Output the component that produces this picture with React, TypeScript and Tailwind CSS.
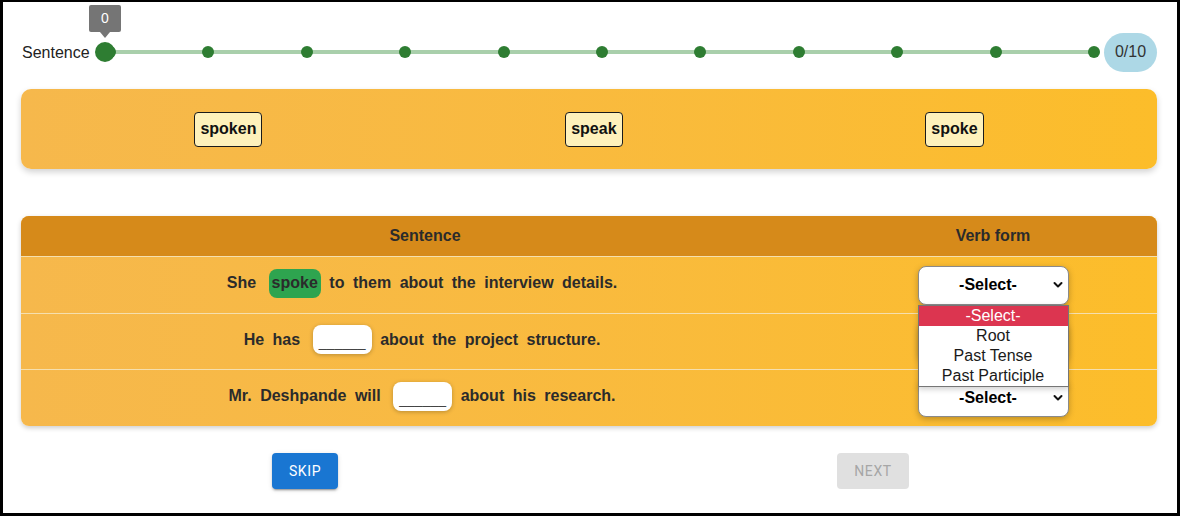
import React from "react";

const font = { fontFamily: '"Liberation Sans", Arial, sans-serif' };

function Chevron() {
  return (
    <svg width="10" height="7" viewBox="0 0 10 7" className="absolute right-[5px] top-1/2 -translate-y-1/2">
      <polyline points="1.5,1.5 5,5 8.5,1.5" fill="none" stroke="#111" strokeWidth="2" strokeLinecap="round" strokeLinejoin="round" />
    </svg>
  );
}

function SelectBox({ open = false, hidden = false, h = "h-[39px]" }: { open?: boolean; hidden?: boolean; h?: string }) {
  return (
    <div className="relative w-[151px]">
      <div className={`relative ${h} w-[151px] bg-white border border-[#8a8a8a] rounded-[8px] shadow-[0_2px_6px_rgba(0,0,0,0.25)] flex items-center justify-center pr-[10px] text-[16px] font-bold text-black`}>
        {hidden ? null : "-Select-"}
        <Chevron />
      </div>
      {open && (
        <div className="absolute left-0 top-full w-[151px] z-10 bg-white border border-[#767676] text-[16px] leading-[20px] text-[#1a1a1a] text-center shadow-[0_2px_6px_rgba(0,0,0,0.2)]">
          <div className="bg-[#dc3550] text-white">-Select-</div>
          <div>Root</div>
          <div>Past Tense</div>
          <div>Past Participle</div>
        </div>
      )}
    </div>
  );
}

function Blank() {
  return (
    <span className="ml-[4px] inline-flex items-end justify-center w-[59px] h-[29px] bg-white rounded-[8px] shadow-[0_1px_4px_rgba(0,0,0,0.25)] font-normal text-[#444] text-[14px] pb-[5px] leading-none">
      ______
    </span>
  );
}

function Sentence({ parts }: { parts: React.ReactNode[] }) {
  return (
    <div className="flex items-center justify-center gap-[8.5px] text-[16px] font-bold text-[#2b2b2b] pb-[4px] pr-[6px]">
      {parts.map((p, i) => (typeof p === "string" ? <span key={i}>{p}</span> : <React.Fragment key={i}>{p}</React.Fragment>))}
    </div>
  );
}

export default function App() {
  const dots = Array.from({ length: 11 });
  return (
    <div style={font} className="w-[1180px] h-[516px] border-[3px] border-t-2 border-black bg-white text-[#222]">
      <div className="pl-[18px] pr-[20px]">
        {/* slider row */}
        <div className="mt-[30px] h-[40px] flex items-center">
          <div className="w-[74px] pl-[1px] pt-[2px] text-[16px] text-[#222]">Sentence</div>
          <div className="relative w-[1009px] h-[40px]">
            <div className="absolute left-[10px] right-[10px] top-1/2 -translate-y-1/2 h-[4px] bg-[#a9cfab]" />
            <div className="absolute left-[9px] right-[4px] top-1/2 -translate-y-1/2 flex justify-between">
              {dots.map((_, i) => (
                <div key={i} className="w-[12px] h-[12px] rounded-full bg-[#2e7d32]" />
              ))}
            </div>
            <div className="absolute left-0 top-[10px] w-[20px] h-[20px] rounded-full bg-[#2e7d32]" />
            <div className="absolute left-[-6px] top-[-27px] w-[32px] h-[27px] bg-[#757575] rounded-[2px] flex items-center justify-center text-white text-[14px]">
              0
              <div className="absolute left-1/2 -translate-x-1/2 top-full w-0 h-0 border-l-[5px] border-r-[5px] border-t-[6px] border-l-transparent border-r-transparent border-t-[#757575]" />
            </div>
          </div>
          <div className="w-[53px] h-[39px] rounded-full bg-[#add8e6] flex items-center justify-center text-[16px] text-[#333]">
            0/10
          </div>
        </div>

        {/* word bank */}
        <div className="mt-[17px] h-[80px] rounded-[10px] bg-gradient-to-r from-[#f6b84c] to-[#fcbd2a] shadow-[0_3px_6px_rgba(0,0,0,0.18)] flex items-center justify-around px-[22px]">
          {["spoken", "speak", "spoke"].map((w) => (
            <div key={w} className="h-[35px] px-[5px] flex items-center bg-[#fef1bb] border border-[#1a1a1a] rounded-[4px] text-[16px] font-bold text-[#111]">
              {w}
            </div>
          ))}
        </div>

        {/* table */}
        <div className="mt-[47px] rounded-[8px] shadow-[0_2px_5px_rgba(0,0,0,0.2)] bg-gradient-to-r from-[#f6b84c] to-[#fcbd2a]">
          <div className="h-[40px] flex items-center bg-[#d68a1a] rounded-t-[8px] text-[16px] font-bold text-[#2b2b2b]">
            <div className="w-[808px] text-center">Sentence</div>
            <div className="flex-1 text-center">Verb form</div>
          </div>
          <div className="h-[57px] flex items-center border-t border-[#f5dfae]">
            <div className="w-[808px]">
              <Sentence
                parts={[
                  "She",
                  <span className="ml-[4px] h-[29px] px-[3px] flex items-center bg-[#2ea44f] rounded-[8px]">spoke</span>,
                  "to", "them", "about", "the", "interview", "details.",
                ]}
              />
            </div>
            <div className="flex-1 flex justify-center">
              <SelectBox open />
            </div>
          </div>
          <div className="h-[56px] flex items-center border-t border-[#f5dfae]">
            <div className="w-[808px]">
              <Sentence parts={["He", "has", <Blank />, "about", "the", "project", "structure."]} />
            </div>
            <div className="flex-1 flex justify-center">
              <SelectBox hidden />
            </div>
          </div>
          <div className="h-[57px] flex items-center border-t border-[#f5dfae] rounded-b-[8px]">
            <div className="w-[808px]">
              <Sentence parts={["Mr.", "Deshpande", "will", <Blank />, "about", "his", "research."]} />
            </div>
            <div className="flex-1 flex justify-center">
              <SelectBox h="h-[37px]" />
            </div>
          </div>
        </div>

        {/* buttons */}
        <div className="mt-[27px] flex" style={{ fontFamily: 'Roboto, "Liberation Sans", sans-serif' }}>
          <div className="flex-1 flex justify-center">
            <button className="h-[36px] px-[17px] rounded-[4px] bg-[#1976d2] text-white text-[14px] font-normal tracking-[0.6px] shadow-[0_3px_1px_-2px_rgba(0,0,0,0.2),0_2px_2px_0_rgba(0,0,0,0.14),0_1px_5px_0_rgba(0,0,0,0.12)]">
              SKIP
            </button>
          </div>
          <div className="flex-1 flex justify-center">
            <button className="h-[36px] px-[17px] rounded-[4px] bg-[#e0e0e0] text-[#a6a6a6] text-[14px] font-normal tracking-[0.6px]">
              NEXT
            </button>
          </div>
        </div>
      </div>
    </div>
  );
}
